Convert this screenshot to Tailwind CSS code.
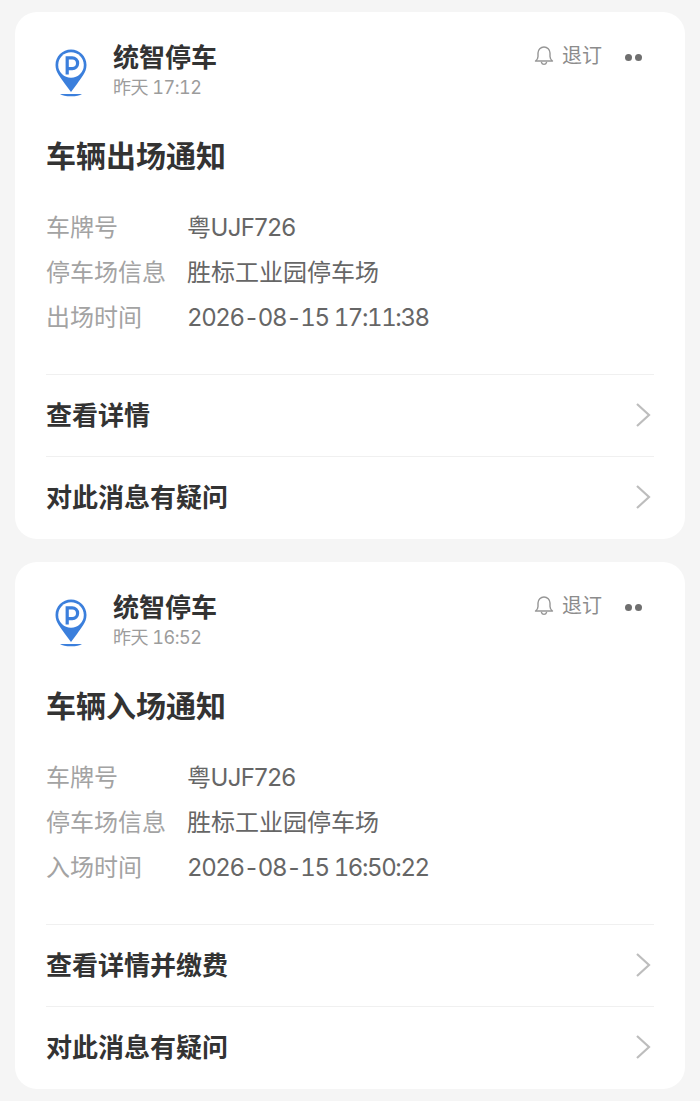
<!DOCTYPE html>
<html lang="zh-CN">
  <head>
    <meta charset="UTF-8" />
    <title>统智停车</title>
    <script src="https://cdn.jsdelivr.net/npm/@tailwindcss/browser@4"></script>
  </head>
  <body class="bg-[#f5f5f5] w-[700px] h-[1101px] overflow-hidden font-['Inter','Noto_Sans_CJK_SC',sans-serif]">
    <main class="flex flex-col gap-[23px] pt-3 px-[15px]">

      <!-- exit notice -->
      <section class="bg-white rounded-[22px] h-[527px] pl-[31px] pr-[31px] flex flex-col">
        <header class="flex h-[90px] pt-[26px]">
          <svg class="w-[36px] h-[50px] ml-[7px] mt-[9px] shrink-0" viewBox="0 0 36 50">
            <path d="M18 2.500C9.400 2.500 2.500 9.400 2.500 18c0 8 5.500 12.500 9.500 19L18 45l6-8c4-6.500 9.500-11 9.500-19C33.500 9.400 26.600 2.500 18 2.500z" fill="#3b7fdc"/>
            <circle cx="18" cy="18" r="12.800" fill="#fff"/>
            <path d="M14.200 27.500V10.800h5a5.400 5.400 0 0 1 0 10.800h-5" fill="none" stroke="#3b7fdc" stroke-width="3.200"/>
            <path d="M7 47h22c-2 1.500-6 2.300-11 2.300S9 48.500 7 47z" fill="#3b7fdc"/>
          </svg>
          <div class="ml-[24px] flex flex-col">
            <div class="text-[26px] leading-[36px] font-bold text-[#333] mt-[2px]">统智停车</div>
            <div class="text-[18px] leading-[24px] text-[#9c9c9c] tabular-nums tracking-[-0.5px]">昨天 17:12</div>
          </div>
          <div class="ml-auto flex items-start h-[36px] pt-[4px] text-[#8c8c8c]">
            <svg class="w-[20px] h-[22px] mt-[2px]" viewBox="0 0 20 22" fill="none" stroke="#969696" stroke-width="1.400">
              <path d="M1.500 17h17c-1.500-1-2.500-2.500-2.500-4.500V9a6 6 0 0 0-12 0v3.500C4 14.500 3 16 1.500 17z" stroke-linejoin="round"/>
              <path d="M7.500 18.500a2.600 2.600 0 0 0 5 0" stroke-linecap="round"/>
            </svg>
            <span class="ml-[8px] text-[20px] leading-[28px]">退订</span>
            <span class="ml-[23px] mr-[12px] mt-[12px] flex gap-[3px]">
              <i class="w-[7px] h-[7px] rounded-full bg-[#6f6f6f]"></i>
              <i class="w-[7px] h-[7px] rounded-full bg-[#6f6f6f]"></i>
            </span>
          </div>
        </header>
        <h2 class="text-[30px] leading-[40px] font-bold text-[#333] mt-[34px]">车辆出场通知</h2>
        <dl class="mt-[29px] text-[24px] leading-[45px] grid grid-cols-[141px_1fr] h-[135px]">
          <dt class="text-[#a3a3a3]">车牌号</dt><dd class="text-[#666] tracking-[-0.6px]">粤UJF726</dd>
          <dt class="text-[#a3a3a3]">停车场信息</dt><dd class="text-[#666]">胜标工业园停车场</dd>
          <dt class="text-[#a3a3a3]">出场时间</dt><dd class="text-[#666] tabular-nums tracking-[-1.4px]">2026-08-15 17:11:38</dd>
        </dl>
        <a class="mt-[34px] h-[82px] pb-[1px] border-t border-[#f0f0f0] flex items-center justify-between text-[26px] font-bold text-[#333]">
          查看详情
          <svg class="w-[16px] h-[26px] mr-[3px]" viewBox="0 0 16 26" fill="none" stroke="#bdbdbd" stroke-width="2.200"><path d="M2 2l12 11L2 24"/></svg>
        </a>
        <a class="h-[82px] pb-[1px] border-t border-[#f0f0f0] flex items-center justify-between text-[26px] font-bold text-[#333]">
          对此消息有疑问
          <svg class="w-[16px] h-[26px] mr-[3px]" viewBox="0 0 16 26" fill="none" stroke="#bdbdbd" stroke-width="2.200"><path d="M2 2l12 11L2 24"/></svg>
        </a>
      </section>

      <!-- entry notice -->
      <section class="bg-white rounded-[22px] h-[527px] pl-[31px] pr-[31px] flex flex-col">
        <header class="flex h-[90px] pt-[26px]">
          <svg class="w-[36px] h-[50px] ml-[7px] mt-[9px] shrink-0" viewBox="0 0 36 50">
            <path d="M18 2.500C9.400 2.500 2.500 9.400 2.500 18c0 8 5.500 12.500 9.500 19L18 45l6-8c4-6.500 9.500-11 9.500-19C33.500 9.400 26.600 2.500 18 2.500z" fill="#3b7fdc"/>
            <circle cx="18" cy="18" r="12.800" fill="#fff"/>
            <path d="M14.200 27.500V10.800h5a5.400 5.400 0 0 1 0 10.800h-5" fill="none" stroke="#3b7fdc" stroke-width="3.200"/>
            <path d="M7 47h22c-2 1.500-6 2.300-11 2.300S9 48.500 7 47z" fill="#3b7fdc"/>
          </svg>
          <div class="ml-[24px] flex flex-col">
            <div class="text-[26px] leading-[36px] font-bold text-[#333] mt-[2px]">统智停车</div>
            <div class="text-[18px] leading-[24px] text-[#9c9c9c] tabular-nums tracking-[-0.5px]">昨天 16:52</div>
          </div>
          <div class="ml-auto flex items-start h-[36px] pt-[4px] text-[#8c8c8c]">
            <svg class="w-[20px] h-[22px] mt-[2px]" viewBox="0 0 20 22" fill="none" stroke="#969696" stroke-width="1.400">
              <path d="M1.500 17h17c-1.500-1-2.500-2.500-2.500-4.500V9a6 6 0 0 0-12 0v3.500C4 14.500 3 16 1.500 17z" stroke-linejoin="round"/>
              <path d="M7.500 18.500a2.600 2.600 0 0 0 5 0" stroke-linecap="round"/>
            </svg>
            <span class="ml-[8px] text-[20px] leading-[28px]">退订</span>
            <span class="ml-[23px] mr-[12px] mt-[12px] flex gap-[3px]">
              <i class="w-[7px] h-[7px] rounded-full bg-[#6f6f6f]"></i>
              <i class="w-[7px] h-[7px] rounded-full bg-[#6f6f6f]"></i>
            </span>
          </div>
        </header>
        <h2 class="text-[30px] leading-[40px] font-bold text-[#333] mt-[34px]">车辆入场通知</h2>
        <dl class="mt-[29px] text-[24px] leading-[45px] grid grid-cols-[141px_1fr] h-[135px]">
          <dt class="text-[#a3a3a3]">车牌号</dt><dd class="text-[#666] tracking-[-0.6px]">粤UJF726</dd>
          <dt class="text-[#a3a3a3]">停车场信息</dt><dd class="text-[#666]">胜标工业园停车场</dd>
          <dt class="text-[#a3a3a3]">入场时间</dt><dd class="text-[#666] tabular-nums tracking-[-1.4px]">2026-08-15 16:50:22</dd>
        </dl>
        <a class="mt-[34px] h-[82px] pb-[1px] border-t border-[#f0f0f0] flex items-center justify-between text-[26px] font-bold text-[#333]">
          查看详情并缴费
          <svg class="w-[16px] h-[26px] mr-[3px]" viewBox="0 0 16 26" fill="none" stroke="#bdbdbd" stroke-width="2.200"><path d="M2 2l12 11L2 24"/></svg>
        </a>
        <a class="h-[82px] pb-[1px] border-t border-[#f0f0f0] flex items-center justify-between text-[26px] font-bold text-[#333]">
          对此消息有疑问
          <svg class="w-[16px] h-[26px] mr-[3px]" viewBox="0 0 16 26" fill="none" stroke="#bdbdbd" stroke-width="2.200"><path d="M2 2l12 11L2 24"/></svg>
        </a>
      </section>
    </main>
  </body>
</html>
